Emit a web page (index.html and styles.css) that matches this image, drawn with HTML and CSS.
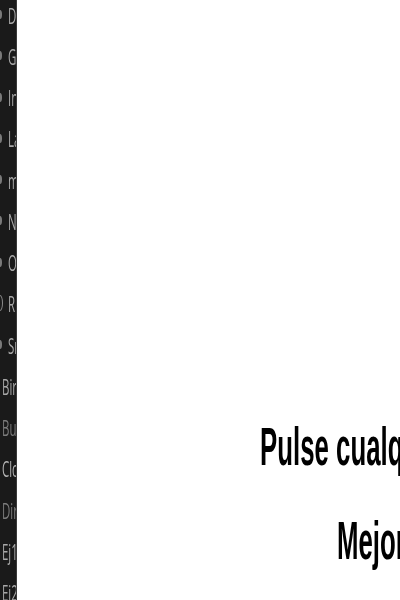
FILE: index.html
```html
<!DOCTYPE html>
<html lang="es">
<head>
<meta charset="utf-8">
<title>Consola</title>
<link rel="stylesheet" href="styles.css">
</head>
<body>
<div class="app">
  <nav class="side">
    <ul class="list">
      <li class="row"><span class="dot"></span><span class="name">Documentos</span></li>
      <li class="row"><span class="dot"></span><span class="name">Git</span></li>
      <li class="row"><span class="dot"></span><span class="name">Include</span></li>
      <li class="row"><span class="dot"></span><span class="name">Lab</span></li>
      <li class="row"><span class="dot"></span><span class="name">mingw</span></li>
      <li class="row"><span class="dot"></span><span class="name">Notas</span></li>
      <li class="row"><span class="dot"></span><span class="name">Otros</span></li>
      <li class="row"><span class="ring"></span><span class="name">RE</span></li>
      <li class="row"><span class="dot"></span><span class="name">Src</span></li>
      <li class="row plain"><span class="name">Bird.c</span></li>
      <li class="row plain dim"><span class="name">Build.bat</span></li>
      <li class="row plain bright"><span class="name">Clock.c</span></li>
      <li class="row plain dim"><span class="name">Dir.c</span></li>
      <li class="row plain"><span class="name">Ej1.c</span></li>
      <li class="row plain"><span class="name">Ej2.c</span></li>
    </ul>
  </nav>
  <main class="screen">
    <p class="line first">Pulse cualquier tecla para continuar</p>
    <p class="line second">Mejor puntuación</p>
  </main>
</div>
</body>
</html>
```

FILE: styles.css
```css
html, body {
  margin: 0;
  height: 100%;
  overflow: hidden;
  background: #fff;
}

.app {
  display: flex;
  width: 400px;
  height: 600px;
}

.side {
  flex: 0 0 16px;
  height: 600px;
  overflow: hidden;
  background: #1a1a1a;
  border-right: 1px solid #3a3a3a;
}

.list {
  list-style: none;
  margin: -6px 0 0;
  padding: 0;
}

.row {
  display: flex;
  align-items: center;
  height: 41.25px;
  padding-left: 8px;
  color: #a8a8a8;
  white-space: nowrap;
}

.row.plain {
  padding-left: 2px;
  color: #a8a8a8;
}

.row.dim {
  color: #7c7c7c;
}

.row.bright {
  color: #b4b4b4;
}

.name {
  display: block;
  font-family: "Open Sans", sans-serif;
  font-size: 22px;
  line-height: 30px;
  transform: scaleX(0.52);
  transform-origin: left center;
  filter: blur(0.3px);
}

.dot,
.ring {
  position: absolute;
  left: -2px;
  box-sizing: border-box;
  width: 4px;
  height: 9px;
  border-radius: 50%;
}

.dot {
  background: #7a7a7a;
}

.ring {
  left: -3px;
  height: 16px;
  width: 6px;
  border: 1px solid #8a8a8a;
}

.screen {
  flex: 1;
  min-width: 0;
  overflow: hidden;
  padding-top: 416px;
  color: #000;
  font-family: "Liberation Sans", Arial, sans-serif;
  font-weight: 700;
  font-size: 54px;
  line-height: 60px;
  white-space: nowrap;
}

.line {
  margin: 0;
  transform: scaleX(0.478);
  transform-origin: left center;
  filter: blur(0.4px);
}

.first {
  margin-left: 243px;
}

.second {
  margin-top: 34px;
  margin-left: 320px;
}
```
